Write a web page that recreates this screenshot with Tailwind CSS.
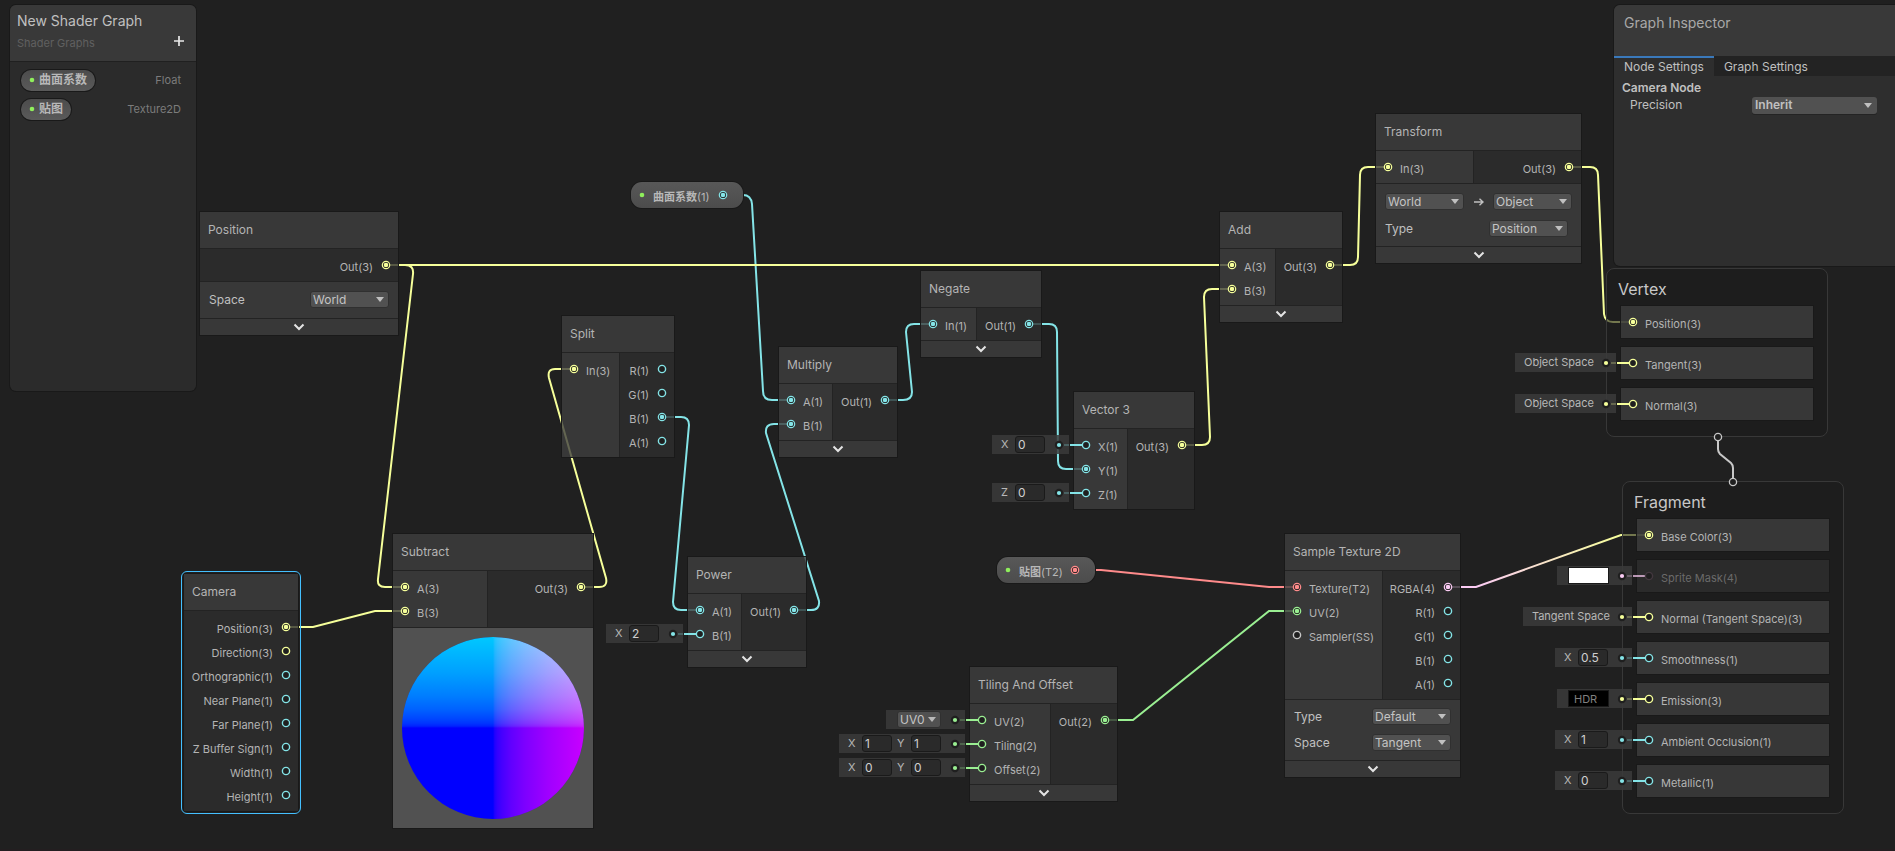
<!DOCTYPE html>
<html lang="en">
<head>
<meta charset="utf-8">
<meta name="viewport" content="width=device-width, initial-scale=1">
<title>New Shader Graph</title>
<script src="https://cdn.jsdelivr.net/npm/@tailwindcss/browser@4"></script>
</head>
<body class="bg-[#202020] font-['Inter','Noto_Sans_CJK_SC',sans-serif] text-xs text-[#c0c0c0]">

<svg class="hidden">
  <symbol id="port-open" viewBox="0 0 10 10"><circle cx="5" cy="5" r="3.6" fill="#1f1f1f" stroke="currentColor" stroke-width="1.4"/></symbol>
  <symbol id="port-linked" viewBox="0 0 10 10"><circle cx="5" cy="5" r="3.7" fill="#1f1f1f" stroke="currentColor" stroke-width="1.2"/><circle cx="5" cy="5" r="2.3" fill="currentColor"/></symbol>
  <symbol id="slot-dot" viewBox="0 0 10 10"><circle cx="5" cy="5" r="4.2" fill="#1f1f1f"/><circle cx="5" cy="5" r="2.1" fill="currentColor"/></symbol>
  <symbol id="dot" viewBox="0 0 10 10"><circle cx="5" cy="5" r="2.3" fill="currentColor"/></symbol>
  <symbol id="caret" viewBox="0 0 8 5"><path d="M0 0H8L4 5Z" fill="currentColor"/></symbol>
  <symbol id="chevron" viewBox="0 0 12 8"><path d="M1.5 1.5L6 6L10.500 1.5" fill="none" stroke="currentColor" stroke-width="2"/></symbol>
</svg>

<main class="relative h-screen w-full overflow-hidden border-b-2 border-[#231e20]">
  <svg id="edges" class="absolute inset-0 size-full" fill="none" stroke-width="2" aria-hidden="true">
    <defs>
      <linearGradient id="pink-yellow" gradientUnits="userSpaceOnUse" x1="1476" y1="587" x2="1621" y2="535">
        <stop offset="0" stop-color="#fbcbf4"/><stop offset="1" stop-color="#f6ff9a"/>
      </linearGradient>
    </defs>
    <g stroke="#84e4e7">
      <path d="M723 195H743Q751 195 752 204L763 391Q763 400 772 400H791"/>
      <path d="M662 417H681Q689 417 689 425L673 602Q673 610 681 610H700"/>
      <path d="M794 610H811Q820 610 819 601L766 433Q765 424 774 424H791"/>
      <path d="M885 400H903Q912 400 912 392L906 332Q906 324 914 324H933"/>
      <path d="M1029 324H1049Q1057 324 1057 332L1058 461Q1058 469 1066 469H1086"/>
    </g>
    <g stroke="#f6ff9a">
      <path d="M386 265H1232"/>
      <path d="M386 265H405Q414 265 413 274L378 579Q377 587 385 587H405"/>
      <path d="M286 627H313L375 611H405"/>
      <path d="M581 587H599Q608 587 606 578L549 378Q547 369 555 369H574"/>
      <path d="M1182 445H1202Q1210 445 1210 437L1204 297Q1204 289 1212 289H1232"/>
      <path d="M1330 265H1350Q1358 265 1358 257L1360 175Q1360 167 1368 167H1388"/>
      <path d="M1569 167H1590Q1598 167 1598 175L1604 314Q1605 322 1613 322H1633"/>
    </g>
    <path stroke="#ff8b8b" d="M1075 570H1101L1269 587H1297"/>
    <path stroke="#9aef92" d="M1105 720H1133L1269 611H1297"/>
    <path stroke="url(#pink-yellow)" d="M1448 587H1476L1621 535H1649"/>
  </svg>

  <div id="graph"></div>

  <svg class="absolute inset-0 size-full pointer-events-none" fill="none" stroke="#c8c8c8" aria-hidden="true">
    <path stroke-width="2" d="M1718 441V449Q1718 452 1720 454L1731 463Q1733 465 1733 468V478"/>
    <circle cx="1718" cy="437" r="3.600" fill="#1f1f1f" stroke-width="1.300"/>
    <circle cx="1733" cy="482" r="3.600" fill="#1f1f1f" stroke-width="1.300"/>
  </svg>

  <aside class="absolute top-[5px] left-[10px] flex h-[386px] w-[186px] flex-col overflow-hidden rounded-md bg-[#2b2b2b] shadow-[0_0_0_1px_#191919]">
    <header class="flex h-[57px] flex-col gap-1 border-b border-[#202020] bg-[#393939] px-[7px] pt-1.5">
      <h1 class="text-sm leading-5">New Shader Graph</h1>
      <div class="flex items-center justify-between pr-1 text-[11px] leading-4 text-[#606060]">
        <span>Shader Graphs</span>
        <button type="button" aria-label="Add property" class="pb-1 text-[#e8e8e8]"><svg class="size-3" viewBox="0 0 12 12"><path d="M6 1V11M1 6H11" stroke="currentColor" stroke-width="1.700"/></svg></button>
      </div>
    </header>
    <ul class="flex flex-col gap-[7px] pt-[7px] pr-[15px] pl-[11px] text-[11px] text-[#7c7c7c]">
      <li class="flex h-[22px] items-center justify-between">
        <button type="button" class="flex h-[21px] items-center gap-0.5 rounded-full bg-linear-to-b from-[#4c4c4c] to-[#5a5a5a] pr-2 pl-1.5 text-xs font-bold text-[#b8b8b8] shadow-[0_0_0_1px_#191919]"><svg class="size-[10px] text-[#8fef5c]"><use href="#dot"/></svg>曲面系数</button>
        <span>Float</span>
      </li>
      <li class="flex h-[22px] items-center justify-between">
        <button type="button" class="flex h-[21px] items-center gap-0.5 rounded-full bg-linear-to-b from-[#4c4c4c] to-[#5a5a5a] pr-2 pl-1.5 text-xs font-bold text-[#b8b8b8] shadow-[0_0_0_1px_#191919]"><svg class="size-[10px] text-[#8fef5c]"><use href="#dot"/></svg>贴图</button>
        <span>Texture2D</span>
      </li>
    </ul>
  </aside>

  <aside class="absolute top-[5px] right-0 flex h-[261px] w-[281px] flex-col overflow-hidden rounded-l-md bg-[#2e2e2e] shadow-[0_0_0_1px_#191919]">
    <header class="h-[51px] bg-[#393939] px-2.5 pt-2"><h2 class="text-sm leading-5 text-[#a8a8a8]">Graph Inspector</h2></header>
    <nav class="flex h-5 bg-[#232323] leading-[18px]">
      <button type="button" class="border-t-2 border-[#3a79bb] bg-[#2e2e2e] px-2.5">Node Settings</button>
      <button type="button" class="border-t-2 border-transparent px-2.5">Graph Settings</button>
    </nav>
    <section class="flex flex-col pt-1 pr-[18px] pl-2">
      <h3 class="leading-4 font-semibold">Camera Node</h3>
      <div class="flex h-[18px] items-center justify-between pl-2">
        <label for="precision">Precision</label>
        <span class="relative flex w-[125px]">
          <select id="precision" class="h-[17px] w-full appearance-none rounded-[3px] bg-[#515151] pl-[3px] text-xs leading-4 font-semibold shadow-[0_1px_0_#242424]"><option>Inherit</option></select>
          <svg class="pointer-events-none absolute top-1.5 right-[5px] h-[5px] w-2"><use href="#caret"/></svg>
        </span>
      </div>
    </section>
  </aside>
</main>

<script>
  const tint = {
    yellow: 'text-[#f6ff9a]', cyan: 'text-[#84e4e7]', green: 'text-[#9aef92]',
    red: 'text-[#ff8b8b]', pink: 'text-[#fbcbf4]', gray: 'text-[#c8c8c8]'
  };
  let uid = 0;

  // Ports are written "Label color", with "*" after the color when an edge is attached.
  const readPort = text => {
    const cut = text.lastIndexOf(' ');
    const color = text.slice(cut + 1);
    return { label: text.slice(0, cut), color: tint[color.replace('*', '')], icon: color.endsWith('*') ? 'port-linked' : 'port-open' };
  };

  const dropdown = (value, width, id) => `
    <span class="relative flex ${width}">
      <select id="${id}" aria-label="${value}" class="h-[17px] w-full appearance-none rounded-[3px] border border-[#303030] bg-[#515151] pl-0.5 text-xs leading-[15px] text-[#c4c4c4]"><option>${value}</option></select>
      <svg class="pointer-events-none absolute top-1.5 right-[5px] h-[5px] w-2"><use href="#caret"/></svg>
    </span>`;

  const field = (axis, value) => {
    const id = 'field' + uid++;
    return `<label for="${id}" class="w-[14px]">${axis}</label><input id="${id}" value="${value}" class="mr-[5px] h-[17px] w-[30px] rounded-[3px] border border-[#1a1a1a] bg-[#2a2a2a] px-0.5 text-xs leading-4 text-[#d0d0d0]">`;
  };

  const slotBody = {
    text: v => `<span class="mr-[7px]">${v}</span>`,
    x: v => `${field('X', v)}<i class="w-1"></i>`,
    z: v => `${field('Z', v)}<i class="w-1"></i>`,
    xy: v => `${field('X', v)}${field('Y', v)}<i class="w-1"></i>`,
    uv: v => `<i class="w-0.5"></i>${dropdown(v, 'w-[44px]', 'field' + uid++)}<i class="w-[9px]"></i>`,
    color: () => `<input type="color" value="#ffffff" aria-label="Sprite mask color" class="mr-2 ml-0.5 h-[17px] w-[41px] appearance-none border border-[#191919] bg-white p-0 [&::-webkit-color-swatch]:border-0 [&::-webkit-color-swatch-wrapper]:p-0">`,
    hdr: v => `<button type="button" class="mr-2 ml-0.5 h-[17px] w-[41px] border border-[#191919] bg-black pl-[5px] text-left text-[11px] leading-4 text-[#808080]">${v}</button>`
  };

  const slot = (spec, color, muted) => {
    const [kind, value] = spec.split(':');
    return `
      <div class="absolute right-full mr-[5px] mb-px flex h-[19px] items-center bg-[#3b3b3b]/85 pr-[5px] pl-[9px] whitespace-nowrap text-[#b8b8b8]">
        ${slotBody[kind](value)}
        <svg class="size-[10px] shrink-0 ${color}"><use href="#slot-dot"/></svg>
        <i class="absolute right-0 h-0.5 w-[5px] bg-current opacity-25 ${color}"></i>
      </div>
      <i class="absolute -left-1 h-0.5 w-3 bg-current ${muted ? 'opacity-70' : ''} ${color}"></i>`;
  };

  const input = (text, spec) => {
    const p = readPort(text);
    return `<li class="relative flex h-6 items-center gap-[7px] pr-[10px] pl-[7px]">
      ${spec ? slot(spec, p.color) : ''}
      <svg class="relative size-[10px] shrink-0 ${p.color}"><use href="#${p.icon}"/></svg><span class="pt-1">${p.label}</span></li>`;
  };
  const output = text => {
    const p = readPort(text);
    return `<li class="flex h-6 items-center justify-end gap-2 pr-[7px]"><span class="pt-1">${p.label}</span><svg class="size-[10px] shrink-0 ${p.color}"><use href="#${p.icon}"/></svg></li>`;
  };

  const node = n => `
    <article class="absolute shadow-[0_0_0_1px_#191919] ${n.frame || ''}" style="left:${n.x}px;top:${n.y}px;width:${n.w}px">
      <h2 class="flex h-[37px] items-center border-b border-[#232323] bg-[#3f3f3f]/80 pl-2 text-xs text-[#b4b4b4]">${n.title}</h2>
      <div class="flex text-[11px] whitespace-nowrap text-[#b4b4b4]">
        ${n.in ? `<ul class="shrink-0 border-r border-[#232323] bg-[#3f3f3f]/80 py-1" style="width:${n.split}px">${n.in.map((p, i) => input(p, n.slots && n.slots[i])).join('')}</ul>` : ''}
        <ul class="grow bg-[#2e2e2e]/80 py-1">${n.out.map(output).join('')}</ul>
      </div>
      ${n.controls ? `<div class="border-t border-[#232323] bg-[#3f3f3f]/80">${n.controls()}</div>` : ''}
      ${n.preview || ''}
      ${n.fold === false ? '' : `<button type="button" aria-label="Collapse ${n.title}" class="flex h-[17px] w-full items-center justify-center border-t border-[#232323] bg-[#3f3f3f]/80 text-[#e4e4e4]"><svg class="h-2 w-3"><use href="#chevron"/></svg></button>`}
    </article>`;

  const setting = (label, value) => {
    const id = 'field' + uid++;
    return `<div class="flex h-[17px] items-center justify-between"><label for="${id}">${label}</label>${dropdown(value, 'w-[79px]', id)}</div>`;
  };

  const pill = p => `
    <div class="absolute flex h-[26px] items-center rounded-[11px] bg-linear-to-b from-[#585858] to-[#4c4c4c] pl-1.5 text-[11px] font-bold text-[#b8b8b8] shadow-[0_0_0_1px_#191919]" style="left:${p.x}px;top:${p.y}px;width:${p.w}px">
      <svg class="size-[10px] text-[#8fef5c]"><use href="#dot"/></svg>
      <span class="grow pt-1 pl-[6px]">${p.name}<span class="font-normal">${p.type}</span></span>
      <svg class="mr-[15px] size-[10px] ${tint[p.color]}"><use href="#port-linked"/></svg>
    </div>`;

  const stack = c => `
    <section class="absolute rounded-lg border border-[#383838] bg-[#1c1c1c]/60 px-3.5 pb-4" style="left:${c.x}px;top:${c.y}px;width:222px">
      <h2 class="-ml-[3px] flex h-[37px] items-center pt-0.5 text-base text-[#c8c8c8]">${c.title}</h2>
      <ul class="flex flex-col gap-[9px] text-[11px] text-[#b4b4b4]">
        ${c.blocks.map(([text, spec, off]) => {
          const p = readPort(text);
          return `<li class="relative flex h-8 items-center gap-[7px] pl-[7px] ${off ? 'bg-[#2e2e2e]/90 text-[#6a6a6a]' : 'bg-[#3f3f3f]/80'} shadow-[0_0_0_1px_#191919]">
            ${spec ? slot(spec, p.color, off) : ''}
            <svg class="relative size-[10px] ${off ? 'text-[#43383f]' : p.color}"><use href="#${p.icon}"/></svg><span class="pt-1">${p.label}</span></li>`;
        }).join('')}
      </ul>
    </section>`;

  // Position preview: red grows to the right, green grows upward, over pure blue.
  const ramp = [[0, 0], [2, 34], [5, 52], [10, 70], [20, 97], [35, 125], [60, 159], [100, 200]];
  const sphere = `
    <svg class="block size-[200px] isolate bg-[#515151]" viewBox="0 0 200 200" role="img" aria-label="Subtract preview">
      <defs>
        <linearGradient id="ramp-x" gradientUnits="userSpaceOnUse" x1="100" y1="0" x2="191" y2="0">${ramp.map(([o, v]) => `<stop offset="${o}%" stop-color="rgb(${v},0,0)"/>`).join('')}</linearGradient>
        <linearGradient id="ramp-y" gradientUnits="userSpaceOnUse" x1="0" y1="100" x2="0" y2="9">${ramp.map(([o, v]) => `<stop offset="${o}%" stop-color="rgb(0,${v},0)"/>`).join('')}</linearGradient>
      </defs>
      <circle cx="100" cy="100" r="91" fill="#0000ff"/>
      <circle cx="100" cy="100" r="91" fill="url(#ramp-x)" class="mix-blend-screen"/>
      <circle cx="100" cy="100" r="91" fill="url(#ramp-y)" class="mix-blend-screen"/>
    </svg>`;

  const nodes = [
    { title: 'Position', x: 200, y: 212, w: 198, out: ['Out(3) yellow*'], controls: () => `<div class="h-9 px-[9px] pt-[9px]">${setting('Space', 'World')}</div>` },
    { title: 'Camera', x: 184, y: 574, w: 114, fold: false, frame: "before:absolute before:-inset-[3px] before:rounded-md before:border before:border-[#44c0ff]",
      out: ['Position(3) yellow*', 'Direction(3) yellow', 'Orthographic(1) cyan', 'Near Plane(1) cyan', 'Far Plane(1) cyan', 'Z Buffer Sign(1) cyan', 'Width(1) cyan', 'Height(1) cyan'] },
    { title: 'Subtract', x: 393, y: 534, w: 200, split: 95, fold: false, in: ['A(3) yellow*', 'B(3) yellow*'], out: ['Out(3) yellow*'], preview: `<div class="border-t border-[#232323]">${sphere}</div>` },
    { title: 'Split', x: 562, y: 316, w: 112, split: 58, fold: false, in: ['In(3) yellow*'], out: ['R(1) cyan', 'G(1) cyan', 'B(1) cyan*', 'A(1) cyan'] },
    { title: 'Power', x: 688, y: 557, w: 118, split: 54, in: ['A(1) cyan*', 'B(1) cyan'], slots: ['', 'x:2'], out: ['Out(1) cyan*'] },
    { title: 'Multiply', x: 779, y: 347, w: 118, split: 54, in: ['A(1) cyan*', 'B(1) cyan*'], out: ['Out(1) cyan*'] },
    { title: 'Negate', x: 921, y: 271, w: 120, split: 56, in: ['In(1) cyan*'], out: ['Out(1) cyan*'] },
    { title: 'Vector 3', x: 1074, y: 392, w: 120, split: 54, fold: false, in: ['X(1) cyan', 'Y(1) cyan*', 'Z(1) cyan'], slots: ['x:0', '', 'z:0'], out: ['Out(3) yellow*'] },
    { title: 'Add', x: 1220, y: 212, w: 122, split: 56, in: ['A(3) yellow*', 'B(3) yellow*'], out: ['Out(3) yellow*'] },
    { title: 'Transform', x: 1376, y: 114, w: 205, split: 98, in: ['In(3) yellow*'], out: ['Out(3) yellow*'],
      controls: () => `<div class="flex h-[62px] flex-col gap-[10px] pt-[9px] pl-[9px]">
        <div class="flex h-[17px] items-center justify-between pr-[9px]">${dropdown('World', 'w-[79px]', 'space-from')}
          <svg class="h-2 w-[10px]" viewBox="0 0 10 8"><path d="M0 4H9M5.500 .7L9 4L5.500 7.300" fill="none" stroke="currentColor" stroke-width="1.400"/></svg>
          ${dropdown('Object', 'w-[79px]', 'space-to')}</div>
        <div class="pr-[13px]">${setting('Type', 'Position')}</div></div>` },
    { title: 'Sample Texture 2D', x: 1285, y: 534, w: 175, split: 98, in: ['Texture(T2) red*', 'UV(2) green*', 'Sampler(SS) gray'],
      out: ['RGBA(4) pink*', 'R(1) cyan', 'G(1) cyan', 'B(1) cyan', 'A(1) cyan'],
      controls: () => `<div class="flex h-[60px] flex-col gap-[9px] px-[9px] pt-2">${setting('Type', 'Default')}${setting('Space', 'Tangent')}</div>` },
    { title: 'Tiling And Offset', x: 970, y: 667, w: 147, split: 81, in: ['UV(2) green', 'Tiling(2) green', 'Offset(2) green'], slots: ['uv:UV0', 'xy:1', 'xy:0'], out: ['Out(2) green*'] }
  ];
  const pills = [
    { name: '曲面系数', type: '(1)', color: 'cyan', x: 631, y: 182, w: 112 },
    { name: '贴图', type: '(T2)', color: 'red', x: 997, y: 557, w: 98 }
  ];
  const stacks = [
    { title: 'Vertex', x: 1606, y: 268, blocks: [['Position(3) yellow*'], ['Tangent(3) yellow', 'text:Object Space'], ['Normal(3) yellow', 'text:Object Space']] },
    { title: 'Fragment', x: 1622, y: 481, blocks: [['Base Color(3) yellow*'], ['Sprite Mask(4) pink', 'color:', true], ['Normal (Tangent Space)(3) yellow', 'text:Tangent Space'],
      ['Smoothness(1) cyan', 'x:0.5'], ['Emission(3) yellow', 'hdr:HDR'], ['Ambient Occlusion(1) cyan', 'x:1'], ['Metallic(1) cyan', 'x:0']] }
  ];

  document.getElementById('graph').innerHTML = stacks.map(stack).join('') + nodes.map(node).join('') + pills.map(pill).join('');
</script>
</body>
</html>
